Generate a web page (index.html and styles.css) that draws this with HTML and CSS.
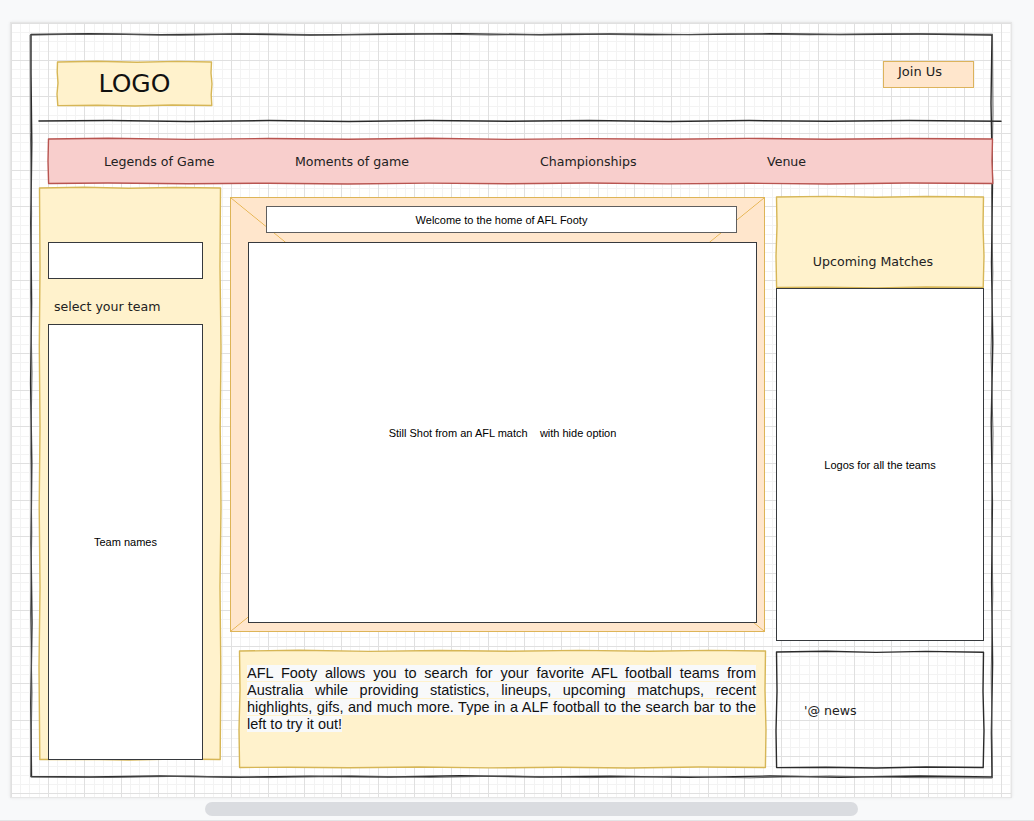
FILE: index.html
```
<!DOCTYPE html>
<html lang="en">
<head>
    <meta charset="UTF-8">
    <meta name="viewport" content="width=device-width, initial-scale=1.0">
    <title>AFL Footy - Wireframe</title>
    <link rel="stylesheet" href="styles.css">
</head>
<body>
    <div class="page">
        <div class="canvas">
            <div class="frame sketch">
                <!-- hand drawn outline, two pencil passes -->
                <svg class="outline" viewBox="0 0 963 745" preserveAspectRatio="none" aria-hidden="true">
                    <path d="M1 1.5 L60 0.8 L130 1.8 L210 1 L280 2 L360 1.2 L430 0.6 L510 1.8 L580 1 L660 1.6 L740 0.8 L810 1.5 L890 1 L962 2 L961 70 L962.5 150 L961.5 230 L962.8 310 L961.2 390 L962.4 470 L961.6 550 L962.6 630 L961.4 700 L962 744 L890 743 L810 744.2 L740 743 L660 744.4 L580 743.2 L510 744 L430 742.8 L360 744 L280 743.2 L210 744.2 L130 743 L60 744 L1.5 743.5 L0.8 670 L2 590 L1 510 L1.8 430 L0.6 350 L1.6 270 L0.8 190 L1.8 110 L1 40 Z"/>
                    <path class="second" d="M0.5 2 L70 1 L150 2.2 L230 0.8 L300 1.8 L380 0.6 L460 2 L540 1 L620 2 L700 0.8 L780 1.8 L860 0.8 L962.5 1.2 L963 80 L961.5 160 L962.8 240 L961 320 L963 400 L961.6 480 L962.8 560 L961.2 640 L962.4 745 L880 744.6 L800 743 L720 744.8 L640 743.4 L560 744.6 L480 743 L400 744.4 L320 742.8 L240 744.6 L160 743.2 L80 744.4 L0.6 744 L2 660 L0.5 580 L1.8 500 L0.8 420 L2 340 L0.6 260 L1.6 180 L0.4 100 Z"/>
                </svg>

                <header class="header">
                    <div class="logo sketch">
                        <svg class="outline" viewBox="0 0 155 45" preserveAspectRatio="none" aria-hidden="true">
                            <path d="M0.5 1 L40 0.3 L80 1.2 L120 0.4 L154.5 1 L154 12 L155 23 L154.2 34 L154.8 44.5 L115 44 L78 45 L40 44.2 L0.8 44.6 L0 33 L1 22 L0.2 11 Z"/>
                        </svg>
                        LOGO
                    </div>
                    <div class="join">Join Us</div>
                </header>

                <div class="rule sketch">
                    <svg class="outline" viewBox="0 0 962 4" preserveAspectRatio="none" aria-hidden="true">
                        <path d="M0 2 L70 1.5 L150 2.4 L230 1.6 L310 2.5 L390 1.6 L470 2.2 L550 1.4 L630 2.4 L710 1.6 L790 2.3 L870 1.5 L962 2.2"/>
                    </svg>
                </div>

                <nav class="nav sketch">
                    <svg class="outline" viewBox="0 0 945 46" preserveAspectRatio="none" aria-hidden="true">
                        <path d="M0.5 1 L60 0.3 L140 1.4 L220 0.5 L300 1.2 L380 0.3 L460 1.4 L540 0.6 L620 1.3 L700 0.4 L780 1.2 L860 0.5 L944.5 1 L944 23 L944.8 45.5 L860 45 L780 46 L700 45.2 L620 45.9 L540 45 L460 45.8 L380 45.1 L300 46 L220 45.2 L140 45.8 L60 45 L0.6 45.5 L0 23 Z"/>
                    </svg>
                    <span>Legends of Game</span>
                    <span>Moments of game</span>
                    <span>Championships</span>
                    <span>Venue</span>
                </nav>

                <div class="main">
                    <aside class="side sketch">
                        <svg class="outline" viewBox="0 0 182 573" preserveAspectRatio="none" aria-hidden="true">
                            <path d="M0.5 1 L45 0.3 L90 1.3 L135 0.5 L181.5 1 L181 80 L182 160 L181.2 240 L182 320 L181 400 L181.8 480 L181.2 572.5 L135 572 L90 573 L45 572.2 L0.8 572.5 L0 480 L1 400 L0.2 320 L1 240 L0.3 160 L1 80 Z"/>
                        </svg>
                        <div class="search"></div>
                        <div class="side-label">select your team</div>
                        <div class="box teams">Team names</div>
                    </aside>

                    <section class="center">
                        <div class="hero">
                            <div class="welcome">Welcome to the home of AFL Footy</div>
                            <div class="box shot">Still Shot from an AFL match&nbsp;&nbsp;&nbsp; with hide option</div>
                        </div>
                        <div class="about sketch">
                            <svg class="outline" viewBox="0 0 527 118" preserveAspectRatio="none" aria-hidden="true">
                                <path d="M0.5 1 L60 0.3 L130 1.4 L200 0.5 L270 1.3 L340 0.4 L410 1.2 L470 0.4 L526.5 1 L526 40 L527 80 L526.4 117.5 L460 117 L390 118 L320 117.2 L250 117.9 L180 117 L110 117.8 L50 117.2 L0.6 117.5 L0 80 L1 40 Z"/>
                            </svg>
                            <p>
                                <span class="line"><span>AFL Footy allows you to search for your favorite AFL football teams from</span></span>
                                <span class="line"><span>Australia while providing statistics, lineups, upcoming matchups, recent</span></span>
                                <span class="line"><span>highlights, gifs, and much more. Type in a ALF football to the search bar to the</span></span>
                                <span class="line last"><span>left to try it out!</span></span>
                            </p>
                        </div>
                    </section>

                    <aside class="right">
                        <div class="upcoming sketch">
                            <svg class="outline" viewBox="0 0 208 92" preserveAspectRatio="none" aria-hidden="true">
                                <path d="M0.5 1 L50 0.4 L100 1.3 L150 0.5 L207.5 1 L207 30 L208 60 L207.2 91.5 L150 91 L100 92 L50 91.3 L0.6 91.5 L0 60 L1 30 Z"/>
                            </svg>
                            Upcoming Matches
                        </div>
                        <div class="box logos">Logos for all the teams</div>
                        <div class="news sketch">
                            <svg class="outline" viewBox="0 0 208 117" preserveAspectRatio="none" aria-hidden="true">
                                <path d="M0.5 1 L50 0.2 L100 1.4 L150 0.4 L207.5 1.2 L207 40 L208 80 L207.2 116.5 L150 116 L100 117 L50 116.2 L0.6 116.6 L0 80 L1 40 Z"/>
                            </svg>
                            '@ news
                        </div>
                    </aside>
                </div>
            </div>
        </div>

        <div class="scrollbar">
            <div class="thumb"></div>
        </div>
    </div>
</body>
</html>
```

FILE: styles.css
```
* {
    box-sizing: border-box;
}

body {
    margin: 0;
    background-color: #f8f9fa;
    font-family: "DejaVu Sans", Verdana, sans-serif;
    color: #222;
}

.page {
    padding: 22px 0 0 10px;
    height: 821px;
    overflow: hidden;
    border-bottom: 1px solid #e3e4e6;
}

/* drawing canvas with the draw.io grid */
.canvas {
    width: 1002px;
    height: 776px;
    padding: 10px 0 0 19px;
    background-color: #fff;
    background-image:
        repeating-linear-gradient(to right, #e0e0e0 0 1px, transparent 1px 36.67px),
        repeating-linear-gradient(to bottom, #e0e0e0 0 1px, transparent 1px 36.67px),
        repeating-linear-gradient(to right, #f3f3f3 0 1px, transparent 1px 9.167px),
        repeating-linear-gradient(to bottom, #f3f3f3 0 1px, transparent 1px 9.167px);
    border: 1px solid #e6e6e6;
    box-shadow: 0 0 3px rgba(0, 0, 0, 0.08);
}

/* sketchy shapes: the wobbly outline is an svg laid behind the content */
.sketch {
    position: relative;
    isolation: isolate;
}

.outline {
    position: absolute;
    inset: 0;
    z-index: -1;
    width: 100%;
    height: 100%;
    overflow: visible;
}

.outline path {
    fill: var(--fill, none);
    stroke: var(--stroke, #333);
    stroke-width: var(--bw, 1.2px);
    stroke-linejoin: round;
    stroke-linecap: round;
}

.frame {
    --stroke: #2a2a2a;
    --bw: 1.4px;
    width: 963px;
    height: 745px;
}

.frame .outline path.second {
    fill: none;
    stroke: #555;
    stroke-width: 0.9px;
}

.header {
    display: flex;
    justify-content: space-between;
    align-items: flex-start;
    padding: 28px 19px 0 27px;
}

.logo {
    --fill: #fff2cc;
    --stroke: #d6b656;
    width: 155px;
    height: 45px;
    display: flex;
    justify-content: center;
    align-items: center;
    font-size: 25px;
    color: #111;
}

.join {
    width: 91px;
    height: 27px;
    padding: 1px 0 0 14px;
    line-height: 17px;
    font-size: 13px;
    background-color: #ffe6cc;
    border: 1px solid #dcb35c;
}

.rule {
    --stroke: #2a2a2a;
    --bw: 1.5px;
    width: 962px;
    height: 4px;
    margin: 12.5px 0 0 9px;
}

.nav {
    --fill: #f8cecc;
    --stroke: #b85450;
    width: 945px;
    height: 46px;
    margin: 15.5px 0 0 18px;
    padding-left: 56px;
    display: grid;
    grid-template-columns: 191px 245px 227px auto;
    align-items: center;
    font-size: 12.6px;
}

.main {
    display: flex;
    align-items: flex-start;
    margin: 3px 0 0 9px;
}

.box {
    position: relative;
    background-color: #fff;
    border: 1px solid #36393d;
    display: flex;
    justify-content: center;
    align-items: center;
    font-family: "Liberation Sans", Arial, sans-serif;
    font-size: 11px;
    color: #000;
}

/* left column */
.side {
    --fill: #fff2cc;
    --stroke: #d6b656;
    width: 182px;
    height: 573px;
    padding: 55px 0 0 9px;
    display: flex;
    flex-direction: column;
}

.search {
    width: 155px;
    height: 37px;
    background-color: #fff;
    border: 1px solid #36393d;
}

.side-label {
    height: 45px;
    padding: 20px 0 0 6px;
    line-height: 15px;
    font-size: 12.6px;
}

.teams {
    width: 155px;
    flex: 1;
}

/* center column */
.center {
    margin: 10px 0 0 9px;
}

.hero {
    width: 535px;
    height: 435px;
    padding-top: 8px;
    background-color: #ffe6cc;
    background-image:
        linear-gradient(to top right, transparent calc(50% - 0.7px), #e6b450 50%, transparent calc(50% + 0.7px)),
        linear-gradient(to bottom right, transparent calc(50% - 0.7px), #e6b450 50%, transparent calc(50% + 0.7px));
    border: 1px solid #ddb457;
}

.welcome {
    height: 27px;
    margin: 0 27px 0 35px;
    background-color: #fff;
    border: 1px solid #5e5e5e;
    display: flex;
    justify-content: center;
    align-items: center;
    font-family: "Liberation Sans", Arial, sans-serif;
    font-size: 11px;
    color: #000;
}

.shot {
    height: 381px;
    margin: 9px 7px 0 17px;
}

.about {
    --fill: #fff2cc;
    --stroke: #d6b656;
    width: 527px;
    height: 118px;
    margin: 18px 0 0 9px;
    padding: 15px 10px 0 8px;
}

.about p {
    margin: 0;
    font-family: "Liberation Sans", Arial, sans-serif;
    font-size: 14.5px;
    line-height: 17px;
    color: #111;
}

.about .line {
    display: block;
    white-space: nowrap;
    text-align: justify;
    text-align-last: justify;
}

.about .line.last {
    text-align-last: left;
}

.about .line span {
    white-space: normal;
    background-color: #f8f9fa;
}

/* right column */
.right {
    width: 208px;
    margin: 9px 0 0 10px;
}

.upcoming {
    --fill: #fff2cc;
    --stroke: #d6b656;
    height: 92px;
    padding: 58px 14px 0 0;
    line-height: 15px;
    text-align: center;
    font-size: 12.6px;
}

.logos {
    height: 353px;
}

.news {
    --stroke: #2a2a2a;
    height: 117px;
    margin-top: 10px;
    padding: 52px 0 0 28px;
    line-height: 15px;
    font-size: 12.6px;
}

/* horizontal scrollbar under the canvas */
.scrollbar {
    margin: 4px 0 0 195px;
}

.thumb {
    width: 653px;
    height: 14px;
    border-radius: 7px;
    background-color: #dadce0;
}
```
